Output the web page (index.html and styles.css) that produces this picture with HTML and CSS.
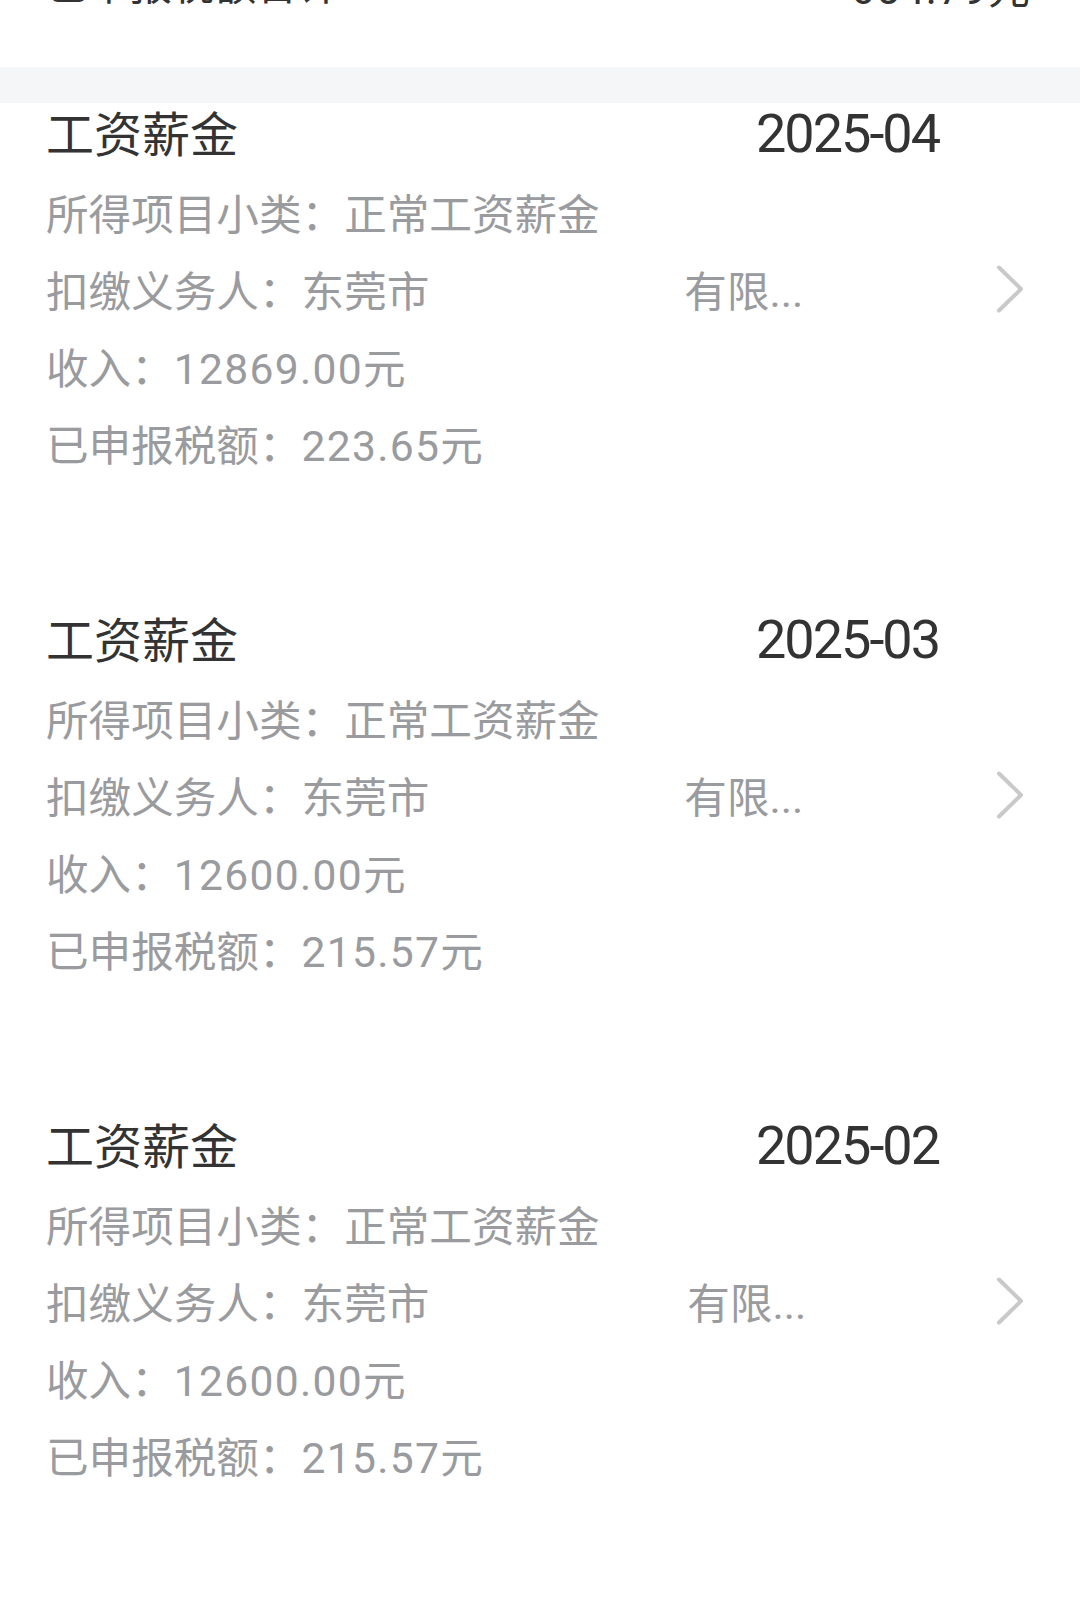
FILE: index.html
```html
<!DOCTYPE html>
<html lang="zh-CN">
<head>
<meta charset="utf-8">
<title>收入纳税明细</title>
<link rel="stylesheet" href="styles.css">
</head>
<body>
<div class="summary">
  <div class="summary-row">
    <span class="summary-label">已申报税额合计</span>
    <span class="summary-value"><span class="num">654.79</span>元</span>
  </div>
</div>
<div class="band"></div>
<div class="list">
  <div class="item">
    <div class="content">
      <div class="title-row">
        <span class="title">工资薪金</span>
        <span class="date">2025-04</span>
      </div>
      <div class="row">所得项目小类：正常工资薪金</div>
      <div class="row">扣缴义务人：东莞市<span class="redact"></span>有限<span class="dots">...</span></div>
      <div class="row">收入：<span class="num">12869.00</span>元</div>
      <div class="row">已申报税额：<span class="num">223.65</span>元</div>
    </div>
    <svg class="chev" viewBox="0 0 30 50" width="30" height="50"><polyline points="4,3.5 26,25 4,46.5" fill="none" stroke="#c9c9c9" stroke-width="4" stroke-linecap="round" stroke-linejoin="round"/></svg>
  </div>
  <div class="item">
    <div class="content">
      <div class="title-row">
        <span class="title">工资薪金</span>
        <span class="date">2025-03</span>
      </div>
      <div class="row">所得项目小类：正常工资薪金</div>
      <div class="row">扣缴义务人：东莞市<span class="redact"></span>有限<span class="dots">...</span></div>
      <div class="row">收入：<span class="num">12600.00</span>元</div>
      <div class="row">已申报税额：<span class="num">215.57</span>元</div>
    </div>
    <svg class="chev" viewBox="0 0 30 50" width="30" height="50"><polyline points="4,3.5 26,25 4,46.5" fill="none" stroke="#c9c9c9" stroke-width="4" stroke-linecap="round" stroke-linejoin="round"/></svg>
  </div>
  <div class="item">
    <div class="content">
      <div class="title-row">
        <span class="title">工资薪金</span>
        <span class="date">2025-02</span>
      </div>
      <div class="row">所得项目小类：正常工资薪金</div>
      <div class="row">扣缴义务人：东莞市<span class="redact wide"></span>有限<span class="dots">...</span></div>
      <div class="row">收入：<span class="num">12600.00</span>元</div>
      <div class="row">已申报税额：<span class="num">215.57</span>元</div>
    </div>
    <svg class="chev" viewBox="0 0 30 50" width="30" height="50"><polyline points="4,3.5 26,25 4,46.5" fill="none" stroke="#c9c9c9" stroke-width="4" stroke-linecap="round" stroke-linejoin="round"/></svg>
  </div>
</div>
</body>
</html>
```
FILE: styles.css
```css
* { box-sizing: border-box; }
html, body {
  margin: 0;
  padding: 0;
  background: #ffffff;
}
body {
  font-family: Roboto, "Noto Sans CJK SC", sans-serif;
  color: #333333;
  overflow: hidden;
}
.summary {
  height: 67px;
  overflow: hidden;
}
.summary-row {
  display: flex;
  justify-content: space-between;
  align-items: flex-start;
  margin-top: -35px;
  padding: 0 50px 0 46px;
  font-size: 42px;
  line-height: 42px;
  color: #333333;
}
.summary-value {
  margin-top: 4px;
}
.band {
  height: 36px;
  background: #f5f6f8;
}
.item {
  display: flex;
  align-items: center;
  padding: 0 55px 124px 46px;
}
.content {
  flex: 1;
  padding-right: 56px;
}
.title-row {
  display: flex;
  justify-content: space-between;
  align-items: baseline;
  height: 62px;
  line-height: 62px;
  margin-bottom: 12px;
}
.title {
  font-size: 48px;
  color: #333333;
}
.date {
  font-size: 54px;
  letter-spacing: -2px;
  color: #333333;
}
.row {
  font-size: 42.6px;
  line-height: 77px;
  height: 77px;
  color: #9a9b9e;
  white-space: nowrap;
}
.num {
  letter-spacing: 1.3px;
}
.redact {
  display: inline-block;
  width: 255px;
}
.redact.wide {
  width: 258px;
}
.dots {
  letter-spacing: 0;
}
.chev {
  flex: none;
  margin-bottom: 11px;
}
```
